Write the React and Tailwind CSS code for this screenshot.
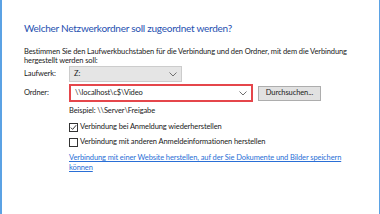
import React from 'react';

const Chevron = () => (
  <svg width="8" height="5" viewBox="0 0 8 5" className="shrink-0">
    <polyline points="0.5,0.5 4,4 7.5,0.5" fill="none" stroke="#707070" strokeWidth="1" />
  </svg>
);

const Checkbox = ({ checked }) => (
  <span className="w-[9px] h-[9px] border border-[#333333] bg-white flex items-center justify-center shrink-0">
    {checked && (
      <svg width="7" height="7" viewBox="0 0 7 7">
        <polyline points="0.8,3.6 2.6,5.4 6.2,1.2" fill="none" stroke="#333333" strokeWidth="1" />
      </svg>
    )}
  </span>
);

const App = () => {
  return (
    <div
      className="w-[380px] h-[214px] bg-white border-l-2 border-r border-[#5ba2e4] overflow-hidden text-[#1a1a1a] text-[7.5px] tracking-[-0.1px]"
      style={{ fontFamily: 'Lato, "Liberation Sans", sans-serif' }}
    >
      <div className="pl-[22px] pt-[21px]">
        <h1 className="text-[10px] tracking-[-0.25px] leading-[14px] text-[#2550b0] font-normal">
          Welcher Netzwerkordner soll zugeordnet werden?
        </h1>

        <p className="mt-[12px] leading-[9px] w-[340px]">
          Bestimmen Sie den Laufwerkbuchstaben für die Verbindung und den Ordner, mit dem die Verbindung hergestellt werden soll:
        </p>

        <div className="mt-[1px] grid grid-cols-[45px_1fr] items-center gap-y-[2px]">
          <span>Laufwerk:</span>
          <div className="w-[113px] h-[16px] bg-[#e5e5e5] border border-[#cccccc] flex items-center justify-between px-[4px]">
            <span>Z:</span>
            <Chevron />
          </div>

          <span>Ordner:</span>
          <div className="flex items-center">
            <div className="w-[184px] h-[18px] border-2 border-[#e5464b] bg-white flex items-center justify-between pl-[4px] pr-[4px]">
              <span>\\localhost\c$\Video</span>
              <Chevron />
            </div>
            <button className="ml-[5px] w-[63px] h-[15px] bg-[#e1e1e1] border border-[#adadad] leading-none">
              Durchsuchen...
            </button>
          </div>
        </div>

        <div className="ml-[45px]">
          <p className="mt-[4px] leading-[10px]">Beispiel: \\Server\Freigabe</p>

          <label className="mt-[6px] flex items-center gap-[2px] leading-[10px]">
            <Checkbox checked />
            <span>Verbindung bei Anmeldung wiederherstellen</span>
          </label>

          <label className="mt-[5px] flex items-center gap-[2px] leading-[10px]">
            <Checkbox />
            <span>Verbindung mit anderen Anmeldeinformationen herstellen</span>
          </label>

          <a href="#" className="mt-[6px] block w-[285px] leading-[10px] text-[#2a6fd6] underline">
            Verbindung mit einer Website herstellen, auf der Sie Dokumente und Bilder speichern können
          </a>
        </div>
      </div>
    </div>
  );
};

export default App;
